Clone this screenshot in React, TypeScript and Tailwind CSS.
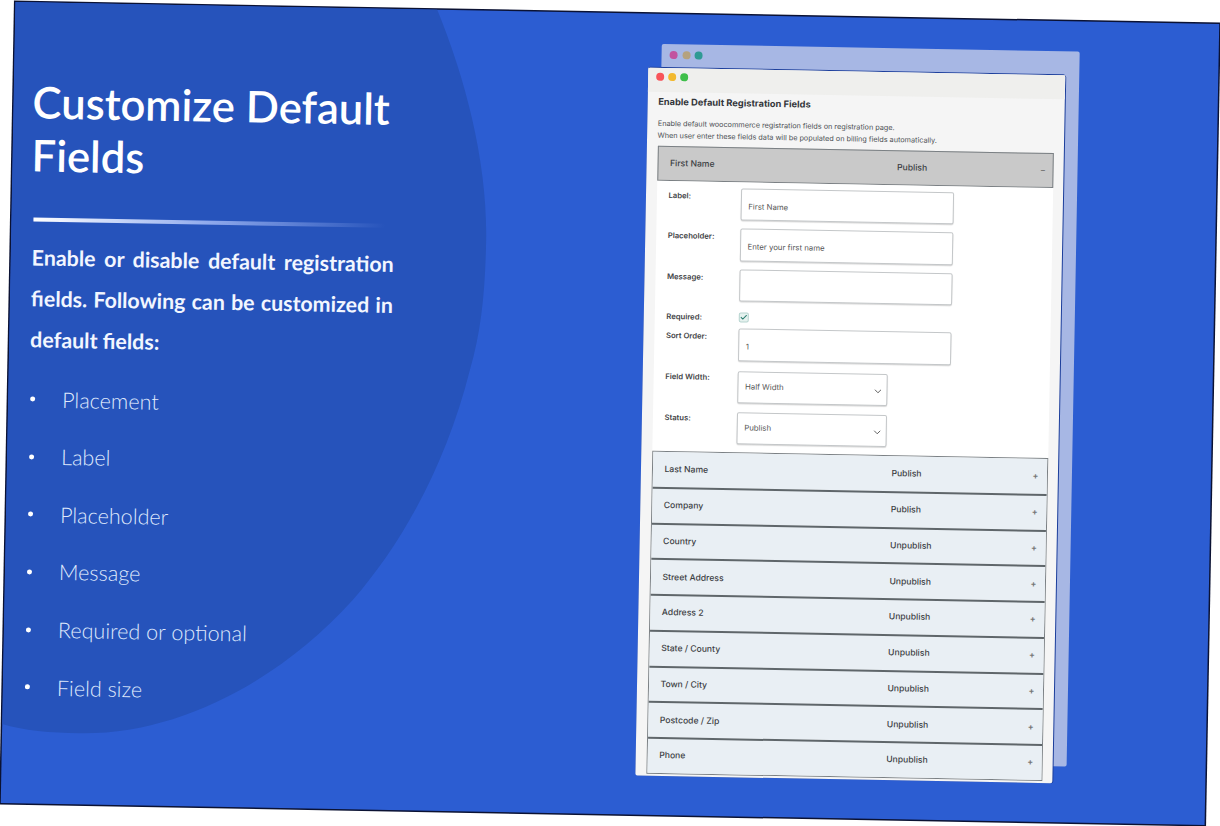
import { ChevronDown, Check } from "lucide-react"

const bullets = ["Placement", "Label", "Placeholder", "Message", "Required or optional", "Field size"]

const rows = [
  ["Last Name", "Publish"],
  ["Company", "Publish"],
  ["Country", "Unpublish"],
  ["Street Address", "Unpublish"],
  ["Address 2", "Unpublish"],
  ["State / County", "Unpublish"],
  ["Town / City", "Unpublish"],
  ["Postcode / Zip", "Unpublish"],
  ["Phone", "Unpublish"],
]

function FieldRow({ label, value, height = "h-[40.4px]" }: { label: string; value: string; height?: string }) {
  return (
    <div className={`flex ${height}`}>
      <span className="w-[72px] pt-[3px] text-[7.7px] leading-[11px] font-semibold text-[#3f4346]">{label}</span>
      <div className="flex h-[32.5px] w-[213px] items-center rounded-[2px] border border-[#c4c7c9] bg-white pt-[5px] pl-[7px] text-[7.8px] text-[#555] shadow-[0_1px_1px_#d8d8d8]">
        {value}
      </div>
    </div>
  )
}

function SelectRow({ label, value, height = "h-[40.4px]" }: { label: string; value: string; height?: string }) {
  return (
    <div className={`flex ${height}`}>
      <span className="w-[72px] pt-[0.5px] text-[7.7px] leading-[11px] font-semibold text-[#3f4346]">{label}</span>
      <div className="flex h-[32px] w-[150px] items-center justify-between rounded-[2px] border border-[#c4c7c9] bg-white pr-[3px] pl-[7px] text-[7.8px] text-[#555] shadow-[0_1px_1px_#d8d8d8]">
        <span>{value}</span>
        <ChevronDown size={11} strokeWidth={2} className="mt-[3px] text-[#555]" />
      </div>
    </div>
  )
}

export default function App() {
  return (
    <div className="flex h-[826px] w-[1220px] items-center justify-center overflow-hidden bg-white">
      <div className="relative flex h-[801px] w-[1204px] shrink-0 rotate-[1.05deg] overflow-hidden bg-[#2c5dd2] pl-[19px] ring-[1.5px] ring-[#0b1233]">
        {/* dark blob behind the copy */}
        <svg className="absolute top-0 left-0" width="500" height="760" viewBox="0 0 500 760">
          <path
            d="M413 -20C450 60 475 150 475 229C475 280 472 320 461 360C440 450 400 530 348 592C280 670 180 730 77 730C50 730 20 728 0 722L0 -20Z"
            fill="#2653bb"
          />
        </svg>

        {/* left copy */}
        <div className="relative w-[615px] shrink-0 pt-[73px] font-[Lato,sans-serif] text-white">
          <h1 className="text-[43.6px] leading-[53px] font-semibold">
            Customize Default
            <br />
            Fields
          </h1>
          <div className="mt-[36px] ml-[3px] h-[4px] w-[352px] bg-gradient-to-r from-white via-[#8fa9ec] via-50% to-transparent" />
          <p className="mt-[16px] ml-[2px] w-[362px] text-justify text-[21.4px] leading-[41px] font-bold text-[#f2f6ff]">
            Enable or disable default registration fields. Following can be customized in default fields:
          </p>
          <ul className="mt-[10px]">
            {bullets.map((b) => (
              <li key={b} className="flex h-[57.6px] items-center text-[21.6px] font-light text-[#dfe8fb]">
                <span className="ml-[3px] h-[5px] w-[5px] rounded-full bg-white" />
                <span className="ml-[27px]">{b}</span>
              </li>
            ))}
          </ul>
        </div>

        {/* browser windows */}
        <div className="relative mt-[54px] h-[708px] w-[417px] shrink-0 font-[Inter,sans-serif]">
          <div className="absolute top-[-24px] left-[13px] h-[715px] w-[418px] rounded-[2px] bg-[#a7b7e4]">
            <div className="flex gap-[4.5px] pt-[7px] pl-[8px]">
              <span className="h-[8px] w-[8px] rounded-full bg-[#c2549f]" />
              <span className="h-[8px] w-[8px] rounded-full bg-[#b5a27f]" />
              <span className="h-[8px] w-[8px] rounded-full bg-[#2f9a94]" />
            </div>
          </div>

          <div className="relative flex h-[708px] flex-col rounded-[2px] bg-[#f5f5f5] shadow-[0_-1px_0_#1d3f9c,1px_0_0_#1d3f9c]">
            <div className="flex h-[24px] shrink-0 gap-[4px] bg-[#efefed] pt-[5px] pl-[8px]">
              <span className="h-[8px] w-[8px] rounded-full bg-[#f8545a]" />
              <span className="h-[8px] w-[8px] rounded-full bg-[#f2b92f]" />
              <span className="h-[8px] w-[8px] rounded-full bg-[#3fbf4a]" />
            </div>

            <div className="px-[10.5px]">
              <h2 className="mt-[3px] text-[9.3px] leading-[13px] font-bold text-[#33363a]">
                Enable Default Registration Fields
              </h2>
              <p className="mt-[10px] text-[7.28px] leading-[12.4px] text-[#4c5054]">
                Enable default woocommerce registration fields on registration page.
                <br />
                When user enter these fields data will be populated on billing fields automatically.
              </p>

              <div className="mt-[3px] flex h-[35px] items-center border border-[#7b8084] bg-[#c9c9c9] text-[8.6px] font-medium text-[#3c4043]">
                <span className="w-[239px] pl-[12px]">First Name</span>
                <span className="w-[143px]">Publish</span>
                <span className="text-[#666]">−</span>
              </div>

              <div className="h-[270px] bg-white pt-[6px] pl-[12px]">
                <FieldRow label="Label:" value="First Name" />
                <FieldRow label="Placeholder:" value="Enter your first name" />
                <FieldRow label="Message:" value="" height="h-[38px]" />
                <div className="flex h-[21.5px] items-center">
                  <span className="w-[72px] text-[7.7px] font-semibold text-[#3f4346]">Required:</span>
                  <span className="flex h-[10px] w-[10px] items-center justify-center rounded-[2px] border border-[#b5d3cf] bg-[#e6f2ef]">
                    <Check size={8} strokeWidth={3} className="text-[#2b7d6f]" />
                  </span>
                </div>
                <FieldRow label="Sort Order:" value="1" height="h-[43px]" />
                <SelectRow label="Field Width:" value="Half Width" height="h-[41px]" />
                <SelectRow label="Status:" value="Publish" />
              </div>

              <div className="border border-[#7b8084]">
                {rows.map(([name, status], i) => (
                  <div
                    key={name}
                    className={
                      i === 0
                        ? "flex h-[35px] items-center bg-[#e9eff4] text-[8.6px] font-medium text-[#3c4043]"
                        : "flex h-[35.75px] items-center border-t-2 border-[#5f666a] bg-[#e9eff4] text-[8.6px] font-medium text-[#3c4043]"
                    }
                  >
                    <span className="w-[239px] pl-[12px]">{name}</span>
                    <span className="w-[141px]">{status}</span>
                    <span className="font-bold text-[#777]">+</span>
                  </div>
                ))}
              </div>
            </div>
          </div>
        </div>
      </div>
    </div>
  )
}
